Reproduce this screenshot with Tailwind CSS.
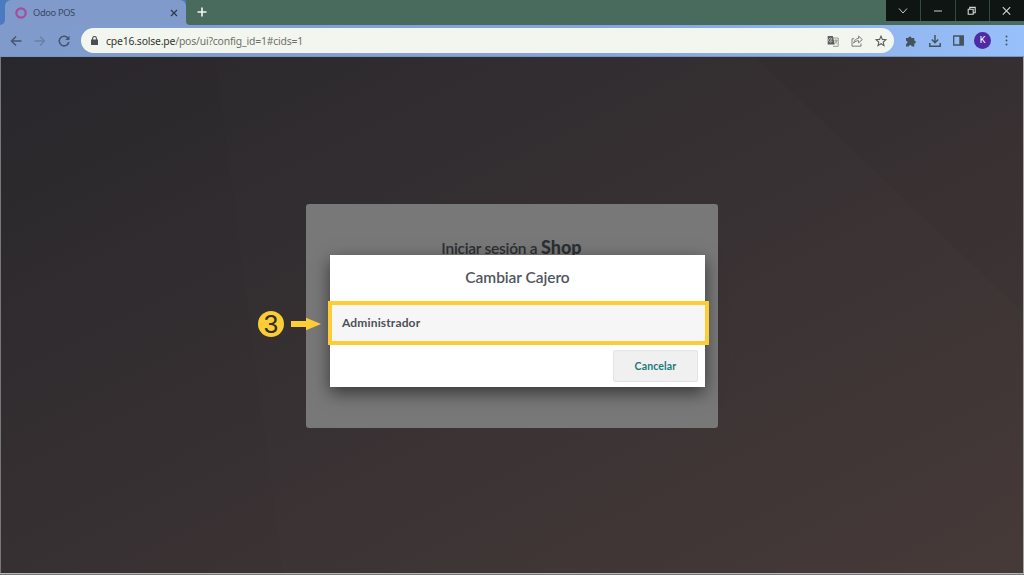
<!DOCTYPE html>
<html lang="es">
<head>
  <meta charset="UTF-8" />
  <meta name="viewport" content="width=device-width, initial-scale=1.0" />
  <title>Odoo POS</title>
  <script src="https://cdn.jsdelivr.net/npm/@tailwindcss/browser@4"></script>
</head>
<body class="h-screen overflow-hidden flex flex-col bg-[#353032] font-['Lato',sans-serif]">
  <!-- Tab strip -->
  <header class="h-[25px] shrink-0 flex items-start bg-[#486b5d]">
    <div class="h-full w-[190px] flex bg-[#4a7ac0]">
      <div class="h-full w-[5px] bg-[#7f9acb]"><div class="h-full rounded-br-[5px] bg-[#4a7ac0]"></div></div>
      <div class="h-full w-[181px] flex items-center rounded-t-[6px] bg-[#7f9acb] pl-[10px] pr-[8px] font-['Noto_Sans',sans-serif]">
        <svg class="w-3 h-3" viewBox="0 0 12 12" fill="none" stroke="#a34d9b" stroke-width="2.2"><circle cx="6" cy="6" r="4.7" /></svg>
        <span class="ml-[6px] text-[9.3px] tracking-[-0.35px] text-[#3d4863]">Odoo POS</span>
        <svg class="ml-auto w-[8px] h-[8px]" viewBox="0 0 8 8" stroke="#303b50" stroke-width="1.3"><path d="M1 1l6 6M7 1l-6 6" /></svg>
      </div>
      <div class="h-full w-[4px] bg-[#7f9acb]"><div class="h-full rounded-bl-[5px] bg-[#486b5d]"></div></div>
    </div>
    <svg class="mt-[7px] ml-[7px] w-[10px] h-[10px]" viewBox="0 0 10 10" stroke="#f4f8f4" stroke-width="1.6"><path d="M5 .5v9M.5 5h9" /></svg>
    <div class="ml-auto h-[21px] w-[138px] grid grid-cols-4 gap-px bg-[#324a42]">
      <div class="flex items-center justify-center bg-[#0f1512]">
        <svg class="w-[10px] h-[10px]" viewBox="0 0 10 10" fill="none" stroke="#c8cdca"><path d="M1 2.5l4 4.5 4-4.5" /></svg>
      </div>
      <div class="flex items-center justify-center bg-[#0f1512]">
        <svg class="w-[10px] h-[10px]" viewBox="0 0 10 10" fill="none" stroke="#c8cdca"><path d="M1 5h8" /></svg>
      </div>
      <div class="flex items-center justify-center bg-[#0f1512]">
        <svg class="w-[10px] h-[10px]" viewBox="0 0 10 10" fill="none" stroke="#d5d9d6" stroke-width="1.1"><path d="M1.2 3.2h5v5h-5zM2.8 3V1.4h5.4v5.4H6.4" /></svg>
      </div>
      <div class="flex items-center justify-center bg-[#0f1512]">
        <svg class="w-[10px] h-[10px]" viewBox="0 0 10 10" fill="none" stroke="#d5d9d6" stroke-width="1.1"><path d="M.8 1.2l7.4 7.4M8.2 1.2L.8 8.6" /></svg>
      </div>
    </div>
  </header>

  <!-- Toolbar -->
  <nav class="h-[32px] shrink-0 flex items-center border-b border-[#7b94be] bg-linear-to-r from-[#7f9acb] via-[#86a5dc] via-60% to-[#98c0fa] pl-[10px] pr-[16px]">
    <svg class="w-3 h-3" viewBox="0 0 12 12" fill="none" stroke="#46566e" stroke-width="1.5"><path d="M11.5 6H1.8M6 1.5L1.5 6 6 10.5" /></svg>
    <svg class="ml-[12px] w-3 h-3" viewBox="0 0 12 12" fill="none" stroke="#6a80a8" stroke-width="1.4"><path d="M.5 6h9.7M6 1.5L10.5 6 6 10.5" /></svg>
    <svg class="ml-[12px] w-3 h-3" viewBox="0 0 12 12" fill="none" stroke="#46566e" stroke-width="1.6"><path d="M10.2 3.6A4.8 4.8 0 1 0 10.8 7" /><path d="M11.5.8v4.3H7.2z" fill="#46566e" stroke="none" /></svg>
    <div class="ml-[11px] w-[813px] h-[25px] flex items-center rounded-full bg-[#f3f6ee] pl-[10px] pr-[7px]">
      <svg class="w-[7px] h-[9px]" viewBox="0 0 7 9" fill="none"><path d="M0 3.5h7V9H0z" fill="#4b4e52" /><path d="M1.6 4V2.4a1.9 1.9 0 0 1 3.8 0V4" stroke="#4b4e52" stroke-width="1.1" /></svg>
      <div class="ml-[8px] pt-[2px] whitespace-nowrap font-['Noto_Sans',sans-serif] text-[10.4px] tracking-[-0.18px] text-[#6c706c]"><span class="text-[#303432]">cpe16.solse.pe</span>/pos/ui?config_id=1#cids=1</div>
      <div class="ml-auto flex items-center gap-[12px]">
        <!-- translate -->
        <svg class="w-3 h-3" viewBox="0 0 12 12" fill="none">
          <path d="M4.5 3h6.7v8.3H6" stroke="#8b8f8d" stroke-width=".9" />
          <path d="M.7 1h5.1l2 8.6H.7z" fill="#5a5e5c" />
          <path d="M5 4.7H3.6v1.2h.8M5.2 3.9a2 2 0 1 0 .2 2" stroke="#d0d3cd" stroke-width=".7" />
          <path d="M7.1 5.3h3.5M8.9 4.4v.9M10 5.4c-.3 1.4-1.1 2.3-2 2.9M8 6.2l2.1 2.5" stroke="#7b7f7d" stroke-width=".7" />
        </svg>
        <!-- share -->
        <svg class="w-3 h-3" viewBox="0 0 12 12" fill="none" stroke="#727674" stroke-width=".95"><path d="M3.2 3.8H1v7.4h9V8.5" /><path d="M2.7 8.2c.5-3 2.3-4.6 4.9-4.8V1.1l3.7 3.5-3.7 3.3V5.7c-2.1 0-3.5.7-4.9 2.5z" /></svg>
        <svg class="w-3 h-3" viewBox="0 0 12 12" fill="none" stroke="#5b5f5d" stroke-width="1.1"><path d="M6 1.1l1.4 3.3 3.5.3-2.7 2.4.8 3.5-3-1.9-3 1.9.8-3.5-2.7-2.4 3.5-.3z" /></svg>
      </div>
    </div>
    <div class="ml-auto flex items-center">
      <svg class="w-3 h-3" viewBox="0 0 12 12" fill="#43545d"><path d="M1 3h2.3a1.6 1.6 0 1 1 3.2 0h2.8v2.5a1.5 1.5 0 1 1 0 3v2.9H6.8a1.5 1.5 0 0 0-3 0H1V8.7a1.5 1.5 0 0 0 0-3z" /></svg>
      <svg class="ml-[12px] w-3 h-3" viewBox="0 0 12 12" fill="none" stroke="#43545d" stroke-width="1.5"><path d="M6 0v7.3M2.8 4.5L6 7.7l3.2-3.2M.8 8v3.2h10.4V8" /></svg>
      <svg class="ml-[12px] w-[11px] h-[11px]" viewBox="0 0 11 11"><path d="M.7 1h9.6v9H.7z" fill="none" stroke="#43545d" stroke-width="1.3" /><path d="M6.3 1h4v9h-4z" fill="#43545d" /></svg>
      <div class="ml-[10px] w-[17px] h-[17px] flex items-center justify-center rounded-full bg-[#4f2aa5] font-['Roboto',sans-serif] text-[9px] text-white">K</div>
      <svg class="ml-[14px] w-[3px] h-[11px]" viewBox="0 0 3 11" fill="#43545d"><circle cx="1.5" cy="1.5" r="1" /><circle cx="1.5" cy="5.5" r="1" /><circle cx="1.5" cy="9.5" r="1" /></svg>
    </div>
  </nav>

  <!-- POS login -->
  <main class="relative flex-1 flex items-start justify-center border-l border-r border-l-[#77787a] border-r-[#a5a5a5] bg-linear-to-br from-[#29282c] via-[#383133] to-[#463a38] pt-[147px] pr-px">
    <svg class="absolute inset-0 w-full h-full" viewBox="0 0 1022 516" preserveAspectRatio="none">
      <path d="M0 0h214l68 516H0z" fill="#000" fill-opacity=".015" />
      <path d="M754 0h268v256z" fill="#000" fill-opacity=".03" />
    </svg>
    <section class="relative w-[412px] h-[224px] rounded-[3px] bg-[#787878] pt-[31px] text-center">
      <h1 class="text-[15.5px] leading-6 text-[#2c2f33] font-semibold tracking-[-0.25px]">Iniciar sesión a <b class="text-[18px] tracking-normal">Shop</b></h1>
    </section>

    <!-- Cashier popup -->
    <div class="absolute left-[329px] top-[198px] w-[375px] h-[132px] flex flex-col bg-white shadow-[0_6px_16px_rgba(0,0,0,0.55)]">
      <h2 class="h-[46px] flex items-center justify-center text-[15.5px] font-semibold tracking-[-0.05px] text-[#50565e]">Cambiar Cajero</h2>
      <div class="-ml-[2px] -mr-[4px] h-[44px] flex items-center border-4 border-[#fccd35] bg-[#f6f6f6] pl-[10px] text-[12px] font-bold tracking-[0.15px] text-[#4b5058]">Administrador</div>
      <footer class="flex justify-end pt-[5px] pr-[7px]">
        <button class="w-[85px] h-[32px] rounded-[2px] border border-[#e4e4e4] bg-[#f0f0f0] pt-px text-[10.5px] font-bold tracking-[0.15px] text-[#1c7a78]">Cancelar</button>
      </footer>
    </div>

    <!-- Step marker -->
    <div class="absolute left-[257px] top-[254px] flex items-center gap-[7px]">
      <span class="w-[26px] h-[26px] flex items-center justify-center rounded-full bg-[#fccd35] font-['Liberation_Sans',sans-serif] text-[26px] leading-none text-[#302c22]">3</span>
      <svg class="w-[30px] h-[14px]" viewBox="0 0 30 14" fill="#fccd35"><path d="M0 4h15V.7L30 7 15 13.3V10H0z" /></svg>
    </div>
  </main>
  <div class="h-[2px] shrink-0 border-t border-[#b5b3b4] bg-[#777]"></div>
</body>
</html>
